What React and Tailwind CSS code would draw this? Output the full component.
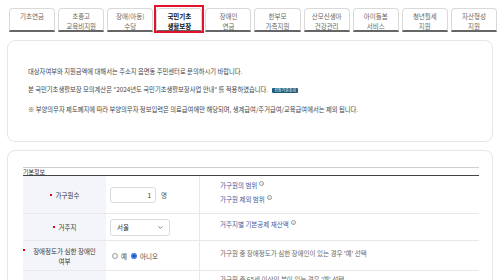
import { ChevronDown } from 'lucide-react'

const tabs = [
  ['기초연금'],
  ['초중고', '교육비지원'],
  ['장애(아동)', '수당'],
  ['국민기초', '생활보장'],
  ['장애인', '연금'],
  ['한부모', '가족지원'],
  ['산모신생아', '건강관리'],
  ['아이돌봄', '서비스'],
  ['청년월세', '지원'],
  ['자산형성', '지원'],
]

function Help() {
  return (
    <span className="inline-flex items-center justify-center w-[5px] h-[5px] ml-[2px] rounded-full border-[0.5px] border-[#999] text-[#999] text-[4px] leading-none align-top mt-[1px]">
      ?
    </span>
  )
}

function Bullet() {
  return <span className="inline-block w-[2px] h-[2px] bg-[#e60012] mr-[4px] align-middle" />
}

export default function App() {
  return (
    <div className="w-[500px] h-[280px] overflow-hidden bg-white text-[#444] font-['Noto_Sans_CJK_KR','Noto_Sans',sans-serif]">
      {/* Tabs */}
      <div className="grid grid-cols-10 gap-[3px] pl-[9px] pr-[3px] pt-[8px]">
        {tabs.map((t, i) => {
          const active = i === 3
          return (
            <div
              key={i}
              className={`relative h-[24px] bg-white border border-[#d9d9d9] border-b-2 border-b-[#666] rounded-t-[4px] pt-[2px] text-center text-[6.5px] leading-[10px] ${
                active ? 'font-bold text-[#111]' : 'text-[#666]'
              }`}
            >
              {t.map((l, j) => (
                <div key={j}>{l}</div>
              ))}
              {active && (
                <span className="absolute -top-[4px] -left-[3px] -right-[3px] -bottom-[3px] border-2 border-[#e2122b]" />
              )}
            </div>
          )
        })}
      </div>

      {/* Notice */}
      <div className="mx-[7px] mt-[8px] h-[102px] border border-[#e6e6e6] rounded-[8px] pl-[20px] pt-[26px] text-[6.3px] leading-[10px] text-[#444]">
        <p>대상자여부와 지원금액에 대해서는 주소지 읍면동 주민센터로 문의하시기 바랍니다.</p>
        <p className="mt-[8px] flex items-center">
          본 국민기초생활보장 모의계산은 "2024년도 국민기초생활보장사업 안내" 를 적용하였습니다.
          <span className="ml-[4px] px-[2px] h-[5px] flex items-center bg-[#1e5b78] text-white text-[4px] leading-none rounded-[1px]">
            선정기준조회
          </span>
        </p>
        <p className="mt-[10px]">
          ※ 부양의무자 제도폐지에 따라 부양의무자 정보입력은 의료급여에만 해당되며, 생계급여/주거급여/교육급여에서는 제외 됩니다.
        </p>
      </div>

      {/* Basic info */}
      <div className="mx-[7px] mt-[8px] h-[200px] border border-[#e6e6e6] rounded-[8px] pl-[15px] pr-[13px] pt-[16px]">
        <div className="h-[9px] border-t border-t-[#cfcfcf] border-b border-b-[#444] text-[6px] leading-[7px] text-[#333]">
          기본정보
        </div>

        <div className="grid grid-cols-[83px_94px_1fr] text-[6.5px] leading-[10px]">
          {/* row 1 */}
          <div className="h-[38px] bg-[#f4f5fa] border-b border-[#e8e8e8] flex items-center justify-center text-[#333]">
            <Bullet />
            가구원수
          </div>
          <div className="h-[38px] border-b border-r border-[#e8e8e8] flex items-center pl-[4px]">
            <div className="w-[46px] h-[16px] border border-[#dcdcdc] rounded-[3px] flex items-center justify-end pr-[4px] text-[#333]">
              1
            </div>
            <span className="ml-[5px] text-[#555]">명</span>
          </div>
          <div className="h-[38px] border-b border-[#e8e8e8] pl-[20px] pt-[4px] text-[#3d5a9c] flex flex-col gap-[4px]">
            <div>
              가구원의 범위
              <Help />
            </div>
            <div>
              가구원 제외 범위
              <Help />
            </div>
          </div>

          {/* row 2 */}
          <div className="h-[27px] bg-[#f4f5fa] border-b border-[#e8e8e8] flex items-center justify-center text-[#333]">
            <Bullet />
            거주지
          </div>
          <div className="h-[27px] border-b border-r border-[#e8e8e8] flex items-center pl-[4px]">
            <div className="w-[60px] h-[17px] border border-[#dcdcdc] rounded-[3px] flex items-center justify-between pl-[6px] pr-[5px] text-[#333]">
              서울
              <ChevronDown size={7} strokeWidth={2.5} className="text-[#555]" />
            </div>
          </div>
          <div className="h-[27px] border-b border-[#e8e8e8] pl-[20px] pt-[5px] text-[#3d5a9c]">
            거주지별 기본공제 재산액
            <Help />
          </div>

          {/* row 3 */}
          <div className="relative h-[30px] bg-[#f4f5fa] border-b border-[#e8e8e8] flex items-center justify-center text-center text-[#333] px-[9px]">
            <span className="absolute left-[0px] top-[8px] w-[2px] h-[2px] bg-[#e60012]" />
            장애정도가 심한 장애인 여부
          </div>
          <div className="h-[30px] border-b border-r border-[#e8e8e8] flex items-center pl-[6px] text-[#444]">
            <span className="w-[6px] h-[6px] rounded-full border border-[#999] bg-white" />
            <span className="ml-[3px]">예</span>
            <span className="ml-[4px] w-[6px] h-[6px] rounded-full bg-[#3b7be8] flex items-center justify-center">
              <span className="w-[2px] h-[2px] rounded-full bg-[#1d3f7a]" />
            </span>
            <span className="ml-[3px]">아니오</span>
          </div>
          <div className="h-[30px] border-b border-[#e8e8e8] pl-[20px] pt-[7px] text-[#666]">
            가구원 중 장애정도가 심한 장애인이 있는 경우 '예' 선택
          </div>

          {/* row 4 */}
          <div className="h-[30px] bg-[#f4f5fa]" />
          <div className="h-[30px] border-r border-[#e8e8e8]" />
          <div className="h-[30px] pl-[20px] pt-[3px] text-[#666]">
            가구원 중 65세 이상인 분이 있는 경우 '예' 선택
          </div>
        </div>
      </div>
    </div>
  )
}
